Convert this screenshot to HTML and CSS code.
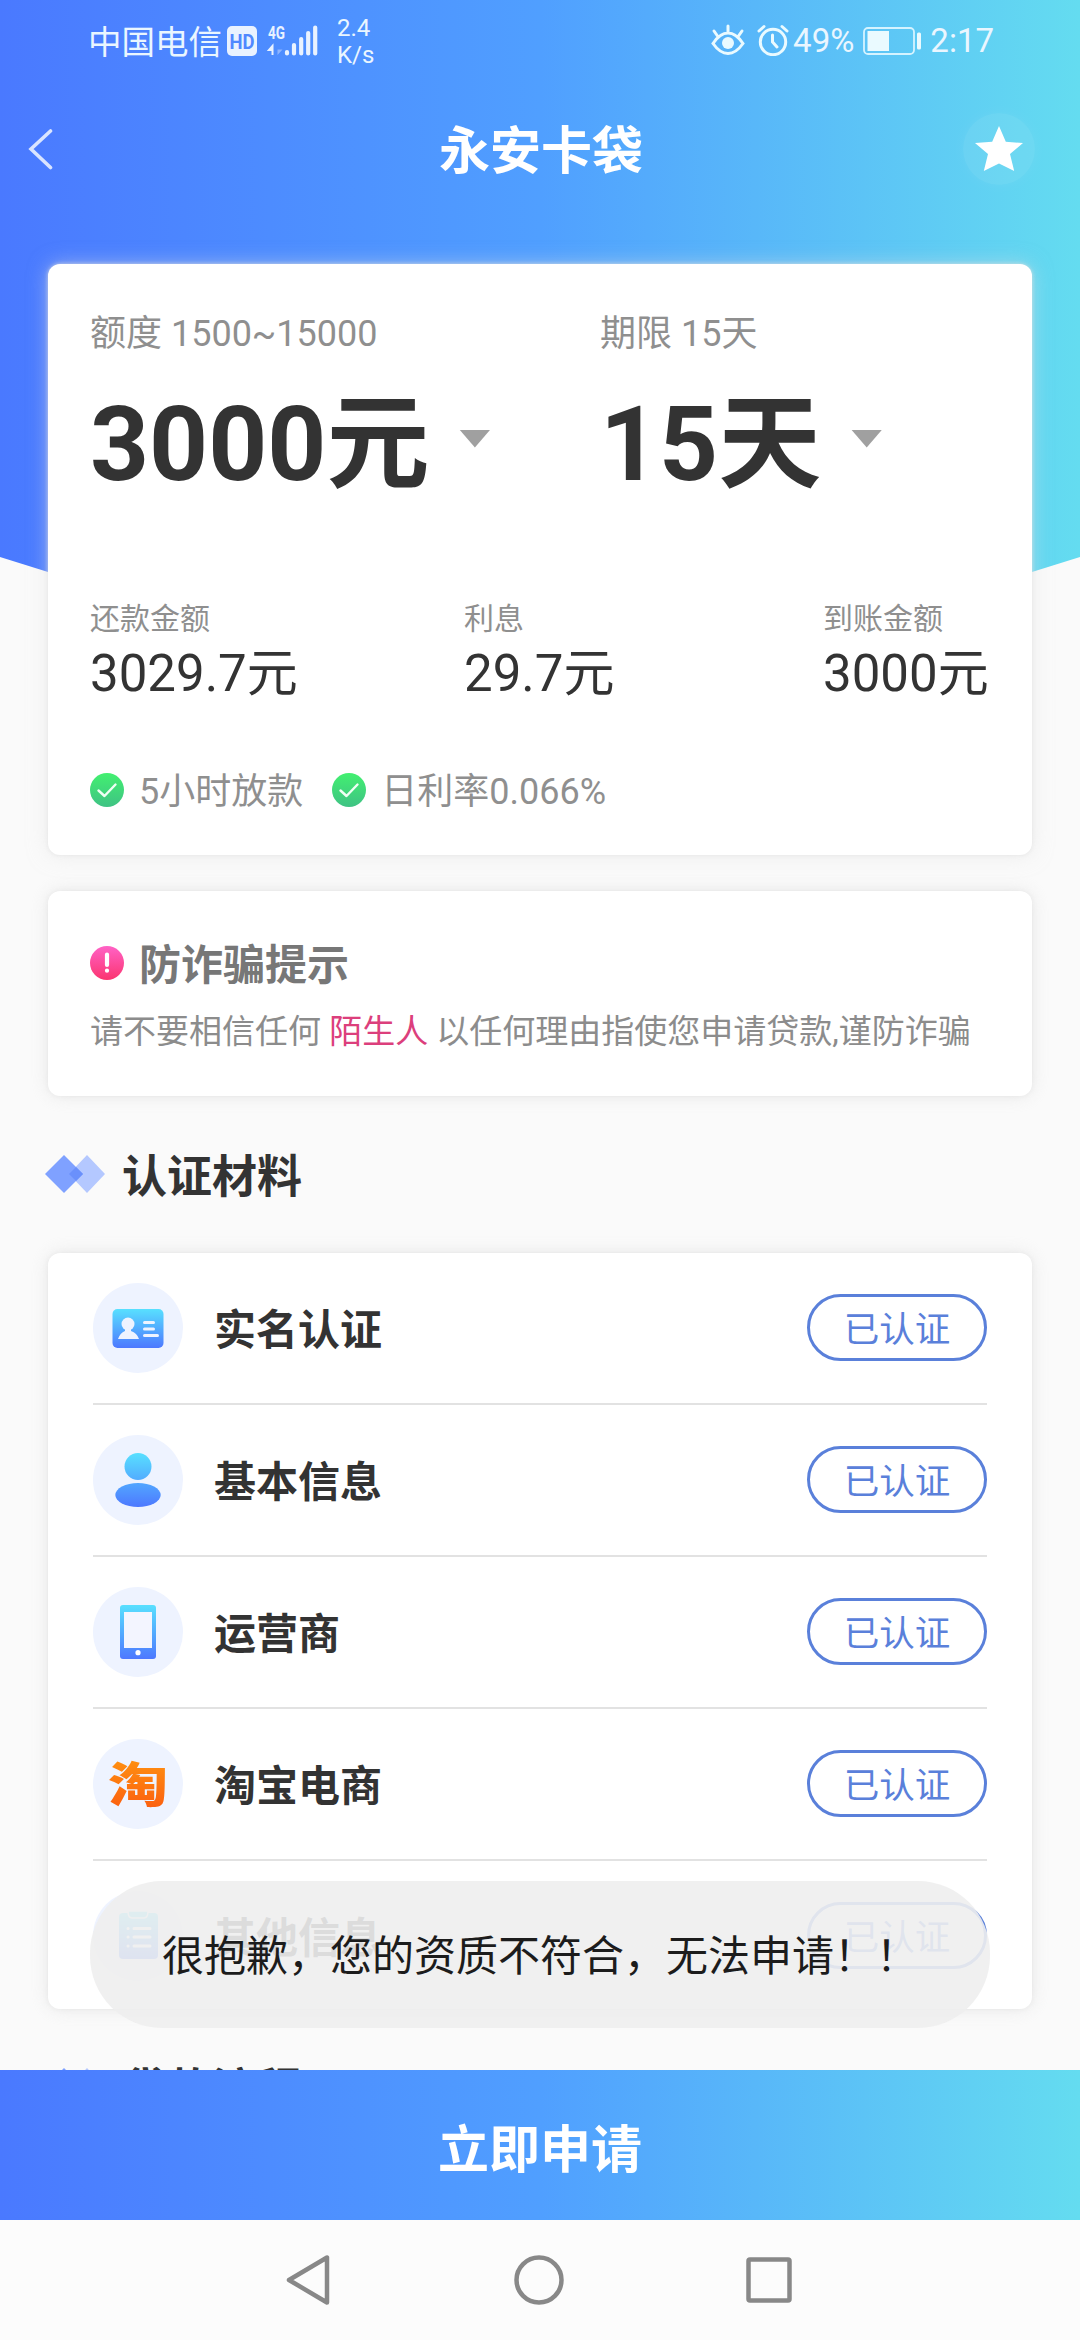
FILE: index.html
```html
<!DOCTYPE html>
<html lang="zh-CN">
<head>
<meta charset="utf-8">
<title>永安卡袋</title>
<link rel="stylesheet" href="styles.css">
</head>
<body>
<svg class="defs" width="0" height="0" aria-hidden="true">
  <defs>
    <linearGradient id="blue" x1="0" y1="0" x2="0" y2="1"><stop offset="0" stop-color="#58e0ff"/><stop offset="1" stop-color="#4d78ff"/></linearGradient>
    <linearGradient id="green" x1="0" y1="0" x2="0" y2="1"><stop offset="0" stop-color="#42f070"/><stop offset="1" stop-color="#3fc284"/></linearGradient>
    <linearGradient id="pink" x1="0" y1="0" x2="0" y2="1"><stop offset="0" stop-color="#ff62c6"/><stop offset="1" stop-color="#fb3570"/></linearGradient>
    <linearGradient id="orange" x1="0" y1="0" x2="0" y2="1"><stop offset="0" stop-color="#ff9210"/><stop offset="1" stop-color="#fb5a10"/></linearGradient>
    <linearGradient id="person" gradientUnits="userSpaceOnUse" x1="0" y1="18" x2="0" y2="72"><stop offset="0" stop-color="#58e0ff"/><stop offset="1" stop-color="#4d78ff"/></linearGradient>
    <symbol id="check" viewBox="0 0 34 34"><circle cx="17" cy="17" r="17" fill="url(#green)"/><path d="M8.500 17.500l6 5.500 11-11.500" fill="none" stroke="#effff4" stroke-width="2.400" stroke-linecap="round" stroke-linejoin="round"/></symbol>
    <symbol id="diamonds" viewBox="0 0 60 38"><path d="M42 0l18 19-18 19-18-19z" fill="#b4c8ff"/><path d="M19 0l19 19-19 19L0 19z" fill="#7fa1ff"/><path d="M31 12l7 7-7 7-7-7z" fill="#6a90fb"/></symbol>
  </defs>
</svg>
<div class="screen">
  <main class="page">
    <div class="status">
      <span class="carrier">中国电信</span>
      <svg class="signal" width="92" height="32" viewBox="0 0 92 32">
        <rect x="1" y="2" width="30" height="30" rx="5" fill="#e9f2ff"/>
        <text x="3.500" y="24.500" font-size="20" font-weight="700" textLength="25" lengthAdjust="spacingAndGlyphs" fill="#4f88ff">HD</text>
        <text x="42" y="14.500" font-size="18" font-weight="700" textLength="17" lengthAdjust="spacingAndGlyphs" fill="#e9f2ff">4G</text>
        <path d="M46.500 31v-9l-3.500 4h3.500z" fill="#e9f2ff" stroke="#e9f2ff" stroke-width="2"/>
        <path d="M51.500 21v10l5-5.500h-5z" fill="#8db4ff"/>
        <g stroke="#e9f2ff" stroke-width="4.200" stroke-linecap="round"><path d="M61 28v1.500M68 21v8.500M75.200 15v14.500M82.200 9v20.500M89.200 3.500v26"/></g>
      </svg>
      <span class="speed">2.4<br>K/s</span>
      <span class="spacer"></span>
      <svg class="eye" width="34" height="32" viewBox="0 0 34 32" fill="none" stroke="#eafaff" stroke-width="3" stroke-linecap="round"><path d="M2 19.500Q9 9 17 9t15 10.500Q25 29.500 17 29.500T2 19.500zM17 2v6M3 7l3.500 5M31 7l-3.500 5"/><circle cx="17" cy="19" r="6" fill="#eafaff" stroke="none"/></svg>
      <svg class="alarm" width="32" height="32" viewBox="0 0 32 32" fill="none" stroke="#eafaff" stroke-width="3" stroke-linecap="round"><circle cx="16" cy="18" r="12.700"/><path d="M2 7l5-4.500M30 7l-5-4.500M15.500 11v7l4.500 5"/></svg>
      <span class="percent">49%</span>
      <svg class="battery" width="60" height="28" viewBox="0 0 60 28"><rect x="1" y="1" width="50" height="26" rx="4" fill="none" stroke="#d5f3ff" stroke-width="1.800"/><rect x="4.500" y="4" width="21.500" height="20" fill="#eafaff"/><rect x="54" y="5.500" width="4" height="17" rx="1.500" fill="#eafaff"/></svg>
      <span class="time">2:17</span>
    </div>

    <header class="topbar">
      <svg class="back" width="26" height="42" viewBox="0 0 26 42"><path d="M22.500 3L3 21l19.500 18.500" fill="none" stroke="#d9e4ff" stroke-width="3.600" stroke-linecap="round"/></svg>
      <h1>永安卡袋</h1>
      <span class="favorite"><svg width="50" height="48" viewBox="0 0 50 48"><path d="M25 1l6.800 15.800L49 18l-13 11 4.200 17L25 38.500 9.800 46 14 29 1 18l17.200-1.200z" fill="#fff"/></svg></span>
    </header>

    <section class="card loan">
      <div class="choices">
        <div class="choice">
          <p>额度 1500~15000</p>
          <div class="pick"><strong>3000元</strong><i class="caret"></i></div>
        </div>
        <div class="choice">
          <p>期限 15天</p>
          <div class="pick"><strong>15天</strong><i class="caret"></i></div>
        </div>
      </div>
      <div class="figures">
        <div><p>还款金额</p><b>3029.7元</b></div>
        <div><p>利息</p><b>29.7元</b></div>
        <div><p>到账金额</p><b>3000元</b></div>
      </div>
      <div class="perks">
        <span><svg width="34" height="34"><use href="#check"/></svg>5小时放款</span>
        <span><svg width="34" height="34"><use href="#check"/></svg>日利率0.066%</span>
      </div>
    </section>

    <section class="card warning">
      <h2><svg width="34" height="34" viewBox="0 0 34 34"><circle cx="17" cy="17" r="17" fill="url(#pink)"/><path d="M17 8.500v10.500M17 24.500v.2" stroke="#fff" stroke-width="4.200" stroke-linecap="round"/></svg>防诈骗提示</h2>
      <p>请不要相信任何 <em>陌生人</em> 以任何理由指使您申请贷款,谨防诈骗</p>
    </section>

    <h3 class="section-title"><svg width="60" height="38"><use href="#diamonds"/></svg>认证材料</h3>

    <ul class="card items">
      <li>
        <svg class="icon" width="90" height="90" viewBox="0 0 90 90"><circle cx="45" cy="45" r="45" fill="#eef3ff"/><rect x="19.500" y="26" width="51" height="39" rx="5" fill="url(#blue)"/><circle cx="35" cy="41" r="6.500" fill="#eef3ff"/><path d="M32 44h6v4q6 2 8 8H25q2-6 7-8z" fill="#eef3ff"/><path d="M51.500 39.500h9M51.500 46h9M51.500 52.500h13" stroke="#eef3ff" stroke-width="3" stroke-linecap="round"/></svg>
        <span class="name">实名认证</span><span class="badge">已认证</span>
      </li>
      <li>
        <svg class="icon" width="90" height="90" viewBox="0 0 90 90"><circle cx="45" cy="45" r="45" fill="#eef3ff"/><circle cx="45" cy="31.500" r="13.500" fill="url(#person)"/><ellipse cx="45" cy="60" rx="22.700" ry="12" fill="url(#person)"/></svg>
        <span class="name">基本信息</span><span class="badge">已认证</span>
      </li>
      <li>
        <svg class="icon" width="90" height="90" viewBox="0 0 90 90"><circle cx="45" cy="45" r="45" fill="#eef3ff"/><rect x="27" y="18" width="36" height="54" rx="3" fill="url(#blue)"/><rect x="31" y="25" width="28" height="36" fill="#f3f5ff"/><circle cx="45" cy="65.700" r="2.600" fill="#fff"/></svg>
        <span class="name">运营商</span><span class="badge">已认证</span>
      </li>
      <li>
        <svg class="icon" width="90" height="90" viewBox="0 0 90 90"><circle cx="45" cy="45" r="45" fill="#eef3ff"/><text x="15" y="63" font-size="48" font-weight="900" textLength="60" lengthAdjust="spacingAndGlyphs" fill="url(#orange)">淘</text></svg>
        <span class="name">淘宝电商</span><span class="badge">已认证</span>
      </li>
      <li>
        <svg class="icon" width="90" height="90" viewBox="0 0 90 90"><circle cx="45" cy="45" r="45" fill="#eef3ff"/><rect x="26" y="22" width="39" height="46" rx="4" fill="url(#blue)"/><path d="M35 20h20q0 7-4 7H39q-4 0-4-7z" fill="#58e0ff" stroke="#eef3ff" stroke-width="1.500"/><path d="M41 37.500h16M41 46h16M41 55h16M35 37.500h.1M35 46h.1M35 55h.1" stroke="#fff" stroke-width="3" stroke-linecap="round"/></svg>
        <span class="name">其他信息</span><span class="badge">已认证</span>
      </li>
    </ul>

    <h3 class="section-title"><svg width="60" height="38"><use href="#diamonds"/></svg>贷款流程</h3>
  </main>

  <button class="apply">立即申请</button>
  <nav class="navbar">
    <svg width="50" height="56" viewBox="0 0 50 56"><path d="M44 5.500v45L6 28z" fill="none" stroke="#888" stroke-width="4.500" stroke-linejoin="round"/></svg>
    <svg width="56" height="56" viewBox="0 0 56 56"><circle cx="28" cy="28" r="22.500" fill="none" stroke="#888" stroke-width="4.500"/></svg>
    <svg width="50" height="56" viewBox="0 0 50 56"><rect x="4.500" y="7.500" width="41" height="41" rx="1.500" fill="none" stroke="#888" stroke-width="4.500"/></svg>
  </nav>
  <div class="toast">很抱歉，您的资质不符合，无法申请！！</div>
</div>
</body>
</html>
```
FILE: styles.css
```css
* { box-sizing: border-box; margin: 0; padding: 0; }

body {
  font-family: Roboto, "Noto Sans CJK SC", sans-serif;
  background: #fafafa;
  color: #333;
}

svg { display: block; flex: none; }
.defs { position: absolute; }

.screen {
  position: relative;
  display: flex;
  flex-direction: column;
  width: 1080px;
  height: 2340px;
  overflow: hidden;
}

.page {
  position: relative;
  z-index: 0;
  height: 2070px;
  overflow: hidden;
  padding: 0 48px;
  background: #fafafa;
}

/* gradient backdrop with a pointed lower edge */
.page::before {
  content: "";
  position: absolute;
  z-index: -1;
  inset: 0 0 auto;
  height: 726px;
  background: linear-gradient(90deg, #4a79ff, #509fff 50%, #64dcf0);
  clip-path: polygon(0 0, 100% 0, 100% 557px, 50% 100%, 0 557px);
}

.status {
  display: flex;
  align-items: center;
  height: 82px;
  margin: 0 38px 0 40px;
  font-size: 33px;
  line-height: 40px;
  color: #eaf6ff;
}
.carrier { font-size: 33.5px; padding-top: 3px; }
.signal { margin: -2px 0 0 4px; }
.speed { margin-left: 19px; padding-top: 2px; font-size: 24px; line-height: 27px; }
.spacer { flex: 1; }
.eye { margin: -3px 12px 0 0; }
.alarm { margin: -3px 4px 0 0; }
.battery { margin: 0 7px 0 9px; }

.topbar {
  display: flex;
  align-items: center;
  justify-content: space-between;
  height: 134px;
  margin: 0 -2px 48px -20px;
}
.topbar h1 {
  padding: 5px 0 0 65px;
  font-size: 51px;
  line-height: 60px;
  color: #fff;
}
.favorite {
  display: grid;
  place-items: center;
  width: 72px;
  height: 72px;
  margin-right: -1px;
  border-radius: 50%;
  background: rgba(255, 255, 255, .07);
  box-shadow: 0 0 14px rgba(255, 255, 255, .06);
}

.card {
  background: #fff;
  border-radius: 12px;
  box-shadow: 0 0 18px rgba(200, 200, 200, .32), 0 0 4px rgba(200, 200, 200, .25);
}

.loan {
  height: 591px;
  padding: 43px 42px 0;
  box-shadow: 0 0 20px rgba(225, 225, 225, .5), 0 0 4px rgba(225, 225, 225, .8);
}
.choices { display: grid; grid-template-columns: 510px 1fr; }
.choice p { font-size: 36px; line-height: 54px; color: #8f8f8f; }
.pick { display: flex; align-items: center; gap: 30px; margin-top: 23px; }
.pick strong { font-size: 103px; line-height: 122px; }
.caret {
  width: 31px;
  height: 18px;
  margin-top: -13px;
  background: #a0a0a0;
  clip-path: polygon(0 0, 100% 0, 50% 100%);
}
.figures { display: grid; grid-template-columns: 374px 359px 1fr; margin-top: 90px; white-space: nowrap; }
.figures p { font-size: 30px; line-height: 46px; color: #8f8f8f; }
.figures b { display: block; font-size: 51px; font-weight: 400; line-height: 64px; }
.perks { display: flex; gap: 29px; margin-top: 59px; font-size: 36px; line-height: 54px; color: #8f8f8f; }
.perks span { display: flex; align-items: center; gap: 15px; }
.perks svg { margin-top: -4px; }

.warning { height: 205px; margin-top: 36px; padding: 47px 42px 0; }
.warning h2 { display: flex; align-items: center; gap: 15px; font-size: 42px; line-height: 56px; color: #777; }
.warning h2 svg { margin-top: -7px; }
.warning p { margin-top: 11px; font-size: 33px; line-height: 54px; color: #8c8c8c; white-space: nowrap; }
.warning em { font-style: normal; color: #dc3f7c; }

.section-title {
  display: flex;
  align-items: center;
  gap: 17px;
  height: 157px;
  margin-left: -3px;
  padding-top: 6px;
  font-size: 45px;
  line-height: 60px;
}
.section-title svg { margin-top: -7px; }

.items { height: 756px; padding: 0 45px; list-style: none; }
.items li { display: flex; align-items: center; height: 152px; border-bottom: 2px solid #e2e2e2; }
.items li:last-child { border-color: transparent; }
.name { flex: 1; margin-left: 31px; padding-top: 5px; font-size: 42px; font-weight: 700; line-height: 60px; }
.badge {
  width: 180px;
  height: 67px;
  margin-top: -1px;
  border: 3px solid #5a80da;
  border-radius: 34px;
  font-size: 35.5px;
  line-height: 66px;
  text-align: center;
  color: #5a80da;
}

.apply {
  height: 150px;
  padding-top: 12px;
  border: 0;
  background: linear-gradient(90deg, #4a79ff, #509fff 50%, #64dcf0);
  font: 700 51px/60px Roboto, "Noto Sans CJK SC", sans-serif;
  color: #fff;
}

.navbar {
  display: flex;
  align-items: center;
  justify-content: space-between;
  height: 120px;
  padding: 0 286px 0 283px;
  background: #fcfcfc;
}

.toast {
  position: absolute;
  left: 90px;
  top: 1881px;
  width: 900px;
  height: 147px;
  border-radius: 72px;
  background: rgba(238, 238, 238, .9);
  font-size: 42px;
  line-height: 152px;
  padding-left: 72px;
  white-space: nowrap;
  color: #1c1c1c;
}
```
